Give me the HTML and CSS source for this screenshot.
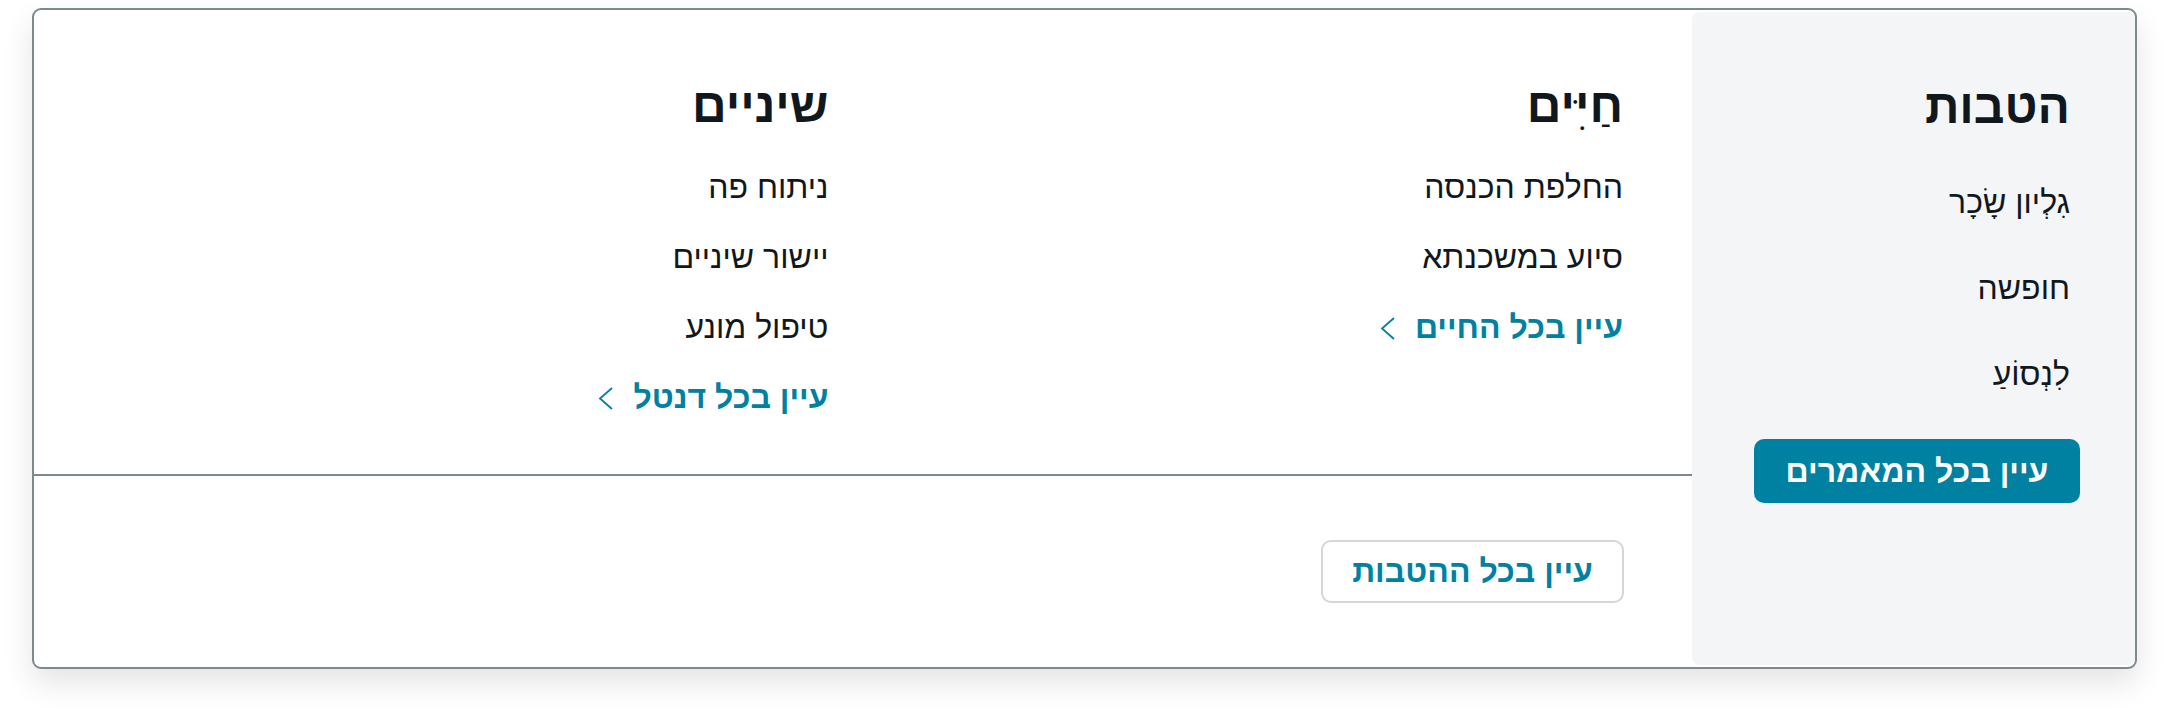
FILE: index.html
```html
<!DOCTYPE html>
<html lang="he" dir="rtl">
<head>
  <meta charset="UTF-8">
  <meta name="viewport" content="width=device-width, initial-scale=1.0">
  <title>תפריט הטבות</title>
  <link rel="stylesheet" href="styles.css">
</head>
<body>
  <div class="mega-menu">

    <!-- Side panel -->
    <aside class="side-panel">
      <h2 class="menu-title">הטבות</h2>
      <ul class="side-list">
        <li><a href="#">גִלְיון שָׂכָר</a></li>
        <li><a href="#">חופשה</a></li>
        <li><a href="#">לִנְסוֹעַ</a></li>
      </ul>
      <a class="btn-primary" href="#">עיין בכל המאמרים</a>
    </aside>

    <!-- Main area -->
    <div class="menu-main">
      <div class="menu-columns">
        <div class="menu-col">
          <h2 class="menu-title">חַיִּים</h2>
          <ul class="col-list">
            <li><a href="#">החלפת הכנסה</a></li>
            <li><a href="#">סיוע במשכנתא</a></li>
            <li>
              <a class="more-link" href="#">עיין בכל החיים
                <svg width="15" height="23" viewBox="0 0 15 23"><path d="M14 1 L2 11.5 L14 22" fill="none" stroke="currentColor" stroke-width="1.8"/></svg>
              </a>
            </li>
          </ul>
        </div>
        <div class="menu-col">
          <h2 class="menu-title">שיניים</h2>
          <ul class="col-list">
            <li><a href="#">ניתוח פה</a></li>
            <li><a href="#">יישור שיניים</a></li>
            <li><a href="#">טיפול מונע</a></li>
            <li>
              <a class="more-link" href="#">עיין בכל דנטל
                <svg width="15" height="23" viewBox="0 0 15 23"><path d="M14 1 L2 11.5 L14 22" fill="none" stroke="currentColor" stroke-width="1.8"/></svg>
              </a>
            </li>
          </ul>
        </div>
      </div>
      <div class="menu-footer">
        <a class="btn-outline" href="#">עיין בכל ההטבות</a>
      </div>
    </div>

  </div>
</body>
</html>
```

FILE: styles.css
```css
body {
  margin: 0;
  padding: 8px 31px 60px 32px;
  background: #fff;
  font-family: "Liberation Sans", sans-serif;
  color: #10181d;
}

a {
  color: inherit;
  text-decoration: none;
}

ul {
  list-style: none;
  margin: 0;
  padding: 0;
}

.mega-menu {
  display: flex;
  border: 2px solid #7e898e;
  border-radius: 9px;
  padding: 2px 0;
  background: #fff;
  box-shadow: 0 14px 30px rgba(0, 0, 0, 0.11);
}

.menu-title {
  margin: 0;
  font-size: 48px;
  font-weight: 700;
  line-height: 53px;
}

/* side panel */

.side-panel {
  width: 443px;
  flex-shrink: 0;
  box-sizing: border-box;
  background: #f4f5f7;
  border-radius: 8px;
  padding: 68px 55px 0 62px;
  height: 653px;
}

.side-panel .menu-title,
.side-list {
  padding-right: 10px;
}

.side-list {
  display: flex;
  flex-direction: column;
  gap: 46px;
  margin: 49px 0 45px;
  font-size: 32px;
  line-height: 40px;
}

.btn-primary {
  display: block;
  height: 64px;
  line-height: 64px;
  text-align: center;
  background: #0081a2;
  color: #fff;
  font-size: 32px;
  font-weight: 700;
  border-radius: 10px;
}

/* main */

.menu-main {
  flex: 1;
  display: flex;
  flex-direction: column;
}

.menu-columns {
  display: grid;
  grid-template-columns: 1fr 1fr;
  padding: 67px 69px 57px 0;
  border-bottom: 2px solid #7e898e;
}

.col-list {
  display: flex;
  flex-direction: column;
  gap: 30px;
  margin-top: 35px;
  font-size: 32px;
  line-height: 40px;
}

.more-link {
  display: inline-flex;
  align-items: center;
  gap: 20px;
  color: #0081a2;
  font-weight: 700;
}

.more-link svg {
  margin-top: 2px;
}

.menu-footer {
  display: flex;
  padding: 64px 68px 0 0;
}

.btn-outline {
  display: block;
  width: 303px;
  height: 63px;
  box-sizing: border-box;
  line-height: 59px;
  text-align: center;
  border: 2px solid #d2d7db;
  border-radius: 10px;
  color: #0081a2;
  font-size: 32px;
  font-weight: 700;
}
```
